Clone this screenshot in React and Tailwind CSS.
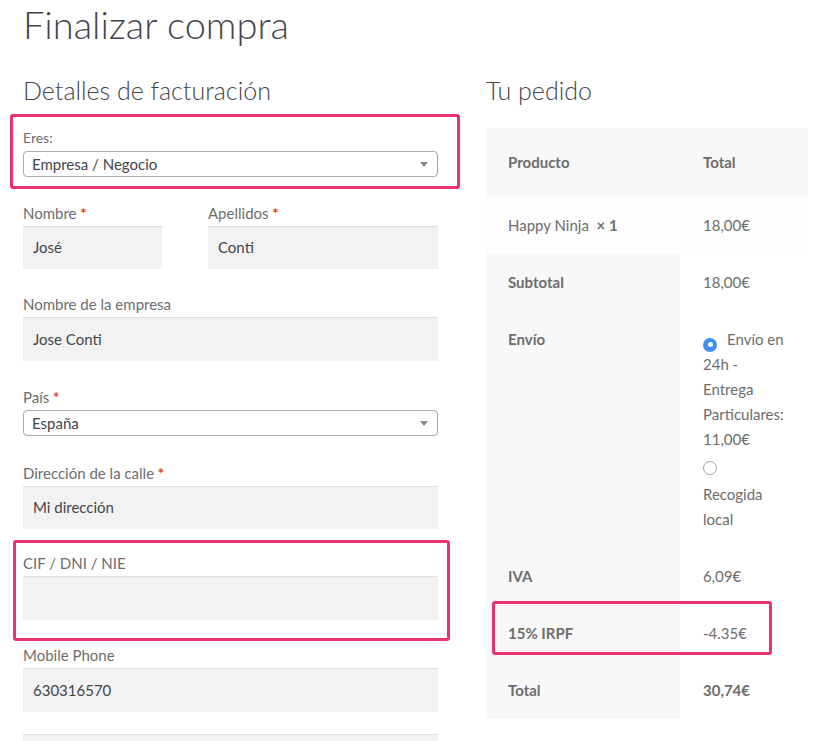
import React from 'react';

const font = { fontFamily: 'Lato, "Liberation Sans", sans-serif' };

function Req() {
  return <span className="text-[#e2401c] font-bold"> *</span>;
}

function Annotation({ className }) {
  return (
    <div
      className={`pointer-events-none absolute rounded-[3px] border-[3px] border-[#e8336e] ${className}`}
    />
  );
}

function Field({ label, required, value, h = 'h-[44px]', className = '' }) {
  return (
    <div className={className}>
      <label className="block h-[25px] text-[15px] leading-[25px] text-[#6d6d6d]">
        {label}
        {required && <Req />}
      </label>
      <div className={`flex items-center bg-[#f2f2f2] px-[10px] text-[15px] text-[#43454b] shadow-[inset_0_1px_1px_rgba(0,0,0,0.08)] ${h}`}>
        {value}
      </div>
    </div>
  );
}

function Select({ value }) {
  return (
    <div className="flex h-[26px] items-center justify-between rounded-[4px] border border-[#aaaaaa] bg-white pl-[8px] pr-[9px] text-[15px] text-[#43454b]">
      <span>{value}</span>
      <span className="h-0 w-0 border-x-[4px] border-t-[5px] border-x-transparent border-t-[#888888]" />
    </div>
  );
}

function Radio({ checked }) {
  if (checked) {
    return (
      <span className="inline-flex h-[14px] w-[14px] items-center justify-center rounded-full bg-[#3a8ff0] align-[-2px]">
        <span className="h-[5px] w-[5px] rounded-full bg-white" />
      </span>
    );
  }
  return <span className="inline-block h-[14px] w-[14px] rounded-full border border-[#a5a5a5] bg-white align-[-2px]" />;
}

function Row({ label, children, bold, headBg = 'bg-[#f8f8f8]', cellBg = 'bg-white', pad = 'py-4' }) {
  return (
    <div className="flex text-[15px] leading-[25px] text-[#6d6d6d]">
      <div className={`w-[194px] pl-[22px] font-bold ${headBg} ${pad}`}>{label}</div>
      <div className={`flex-1 pl-[23px] pr-[10px] ${cellBg} ${pad} ${bold ? 'font-bold' : ''}`}>{children}</div>
    </div>
  );
}

export default function App() {
  return (
    <div className="min-h-screen bg-white" style={font}>
      <div className="flex gap-[48px] pl-[23px]">
        {/* Billing */}
        <div className="w-[415px]">
          <h1 className="h-[55px] text-[38px] font-light leading-[48px] text-[#43454b]">Finalizar compra</h1>
          <h3 className="mt-[16px] h-[39px] text-[25px] font-light leading-[38px] text-[#43454b]">Detalles de facturación</h3>

          <div className="relative mt-[16px]">
            <Annotation className="-left-[13px] -right-[22px] -top-[12px] -bottom-[12px]" />
            <label className="block h-[25px] text-[14px] leading-[24px] text-[#6d6d6d]">Eres:</label>
            <Select value="Empresa / Negocio" />
          </div>

          <div className="mt-[24px] flex justify-between">
            <Field label="Nombre" required value="José" h="h-[43px]" className="w-[139px]" />
            <Field label="Apellidos" required value="Conti" h="h-[43px]" className="w-[230px]" />
          </div>

          <Field label="Nombre de la empresa" value="Jose Conti" className="mt-[23px]" />

          <div className="mt-[24px]">
            <label className="block h-[25px] text-[15px] leading-[25px] text-[#6d6d6d]">
              País<Req />
            </label>
            <Select value="España" />
          </div>

          <Field label="Dirección de la calle" required value="Mi dirección" h="h-[43px]" className="mt-[25px]" />

          <div className="relative mt-[22px]">
            <Annotation className="-left-[10px] -right-[12px] -top-[11px] -bottom-[21px]" />
            <Field label="CIF / DNI / NIE" value="" />
          </div>

          <Field label="Mobile Phone" value="630316570" className="mt-[23px]" />

          <div className="mt-[22px] h-[44px] bg-[#f2f2f2] shadow-[inset_0_1px_1px_rgba(0,0,0,0.08)]" />
        </div>

        {/* Order */}
        <div className="w-[322px]">
          <div className="h-[55px]" />
          <h3 className="mt-[16px] h-[39px] text-[25px] font-light leading-[38px] text-[#43454b]">Tu pedido</h3>

          <div className="mt-[18px]">
            <Row label="Producto" bold cellBg="bg-[#f8f8f8]" pad="py-[22px]">Total</Row>
            <div className="flex bg-[#fdfdfd] py-4 text-[15px] leading-[25px] text-[#6d6d6d]">
              <div className="w-[194px] pl-[22px]">
                Happy Ninja&nbsp;&nbsp;<strong className="font-bold">× 1</strong>
              </div>
              <div className="flex-1 pl-[23px]">18,00€</div>
            </div>
            <Row label="Subtotal">18,00€</Row>
            <Row label="Envío">
              <div>
                <Radio checked />
                <span className="ml-[10px]">Envío en</span>
              </div>
              <div>24h -</div>
              <div>Entrega</div>
              <div>Particulares:</div>
              <div>11,00€</div>
              <div className="flex h-[30px] items-center pt-[2px]">
                <Radio />
              </div>
              <div>Recogida</div>
              <div>local</div>
            </Row>
            <Row label="IVA">6,09€</Row>
            <div className="relative">
              <Annotation className="left-[6px] right-[36px] -top-[4px] bottom-[7px]" />
              <Row label="15% IRPF">-4.35€</Row>
            </div>
            <Row label="Total" bold>30,74€</Row>
          </div>
        </div>
      </div>
    </div>
  );
}
